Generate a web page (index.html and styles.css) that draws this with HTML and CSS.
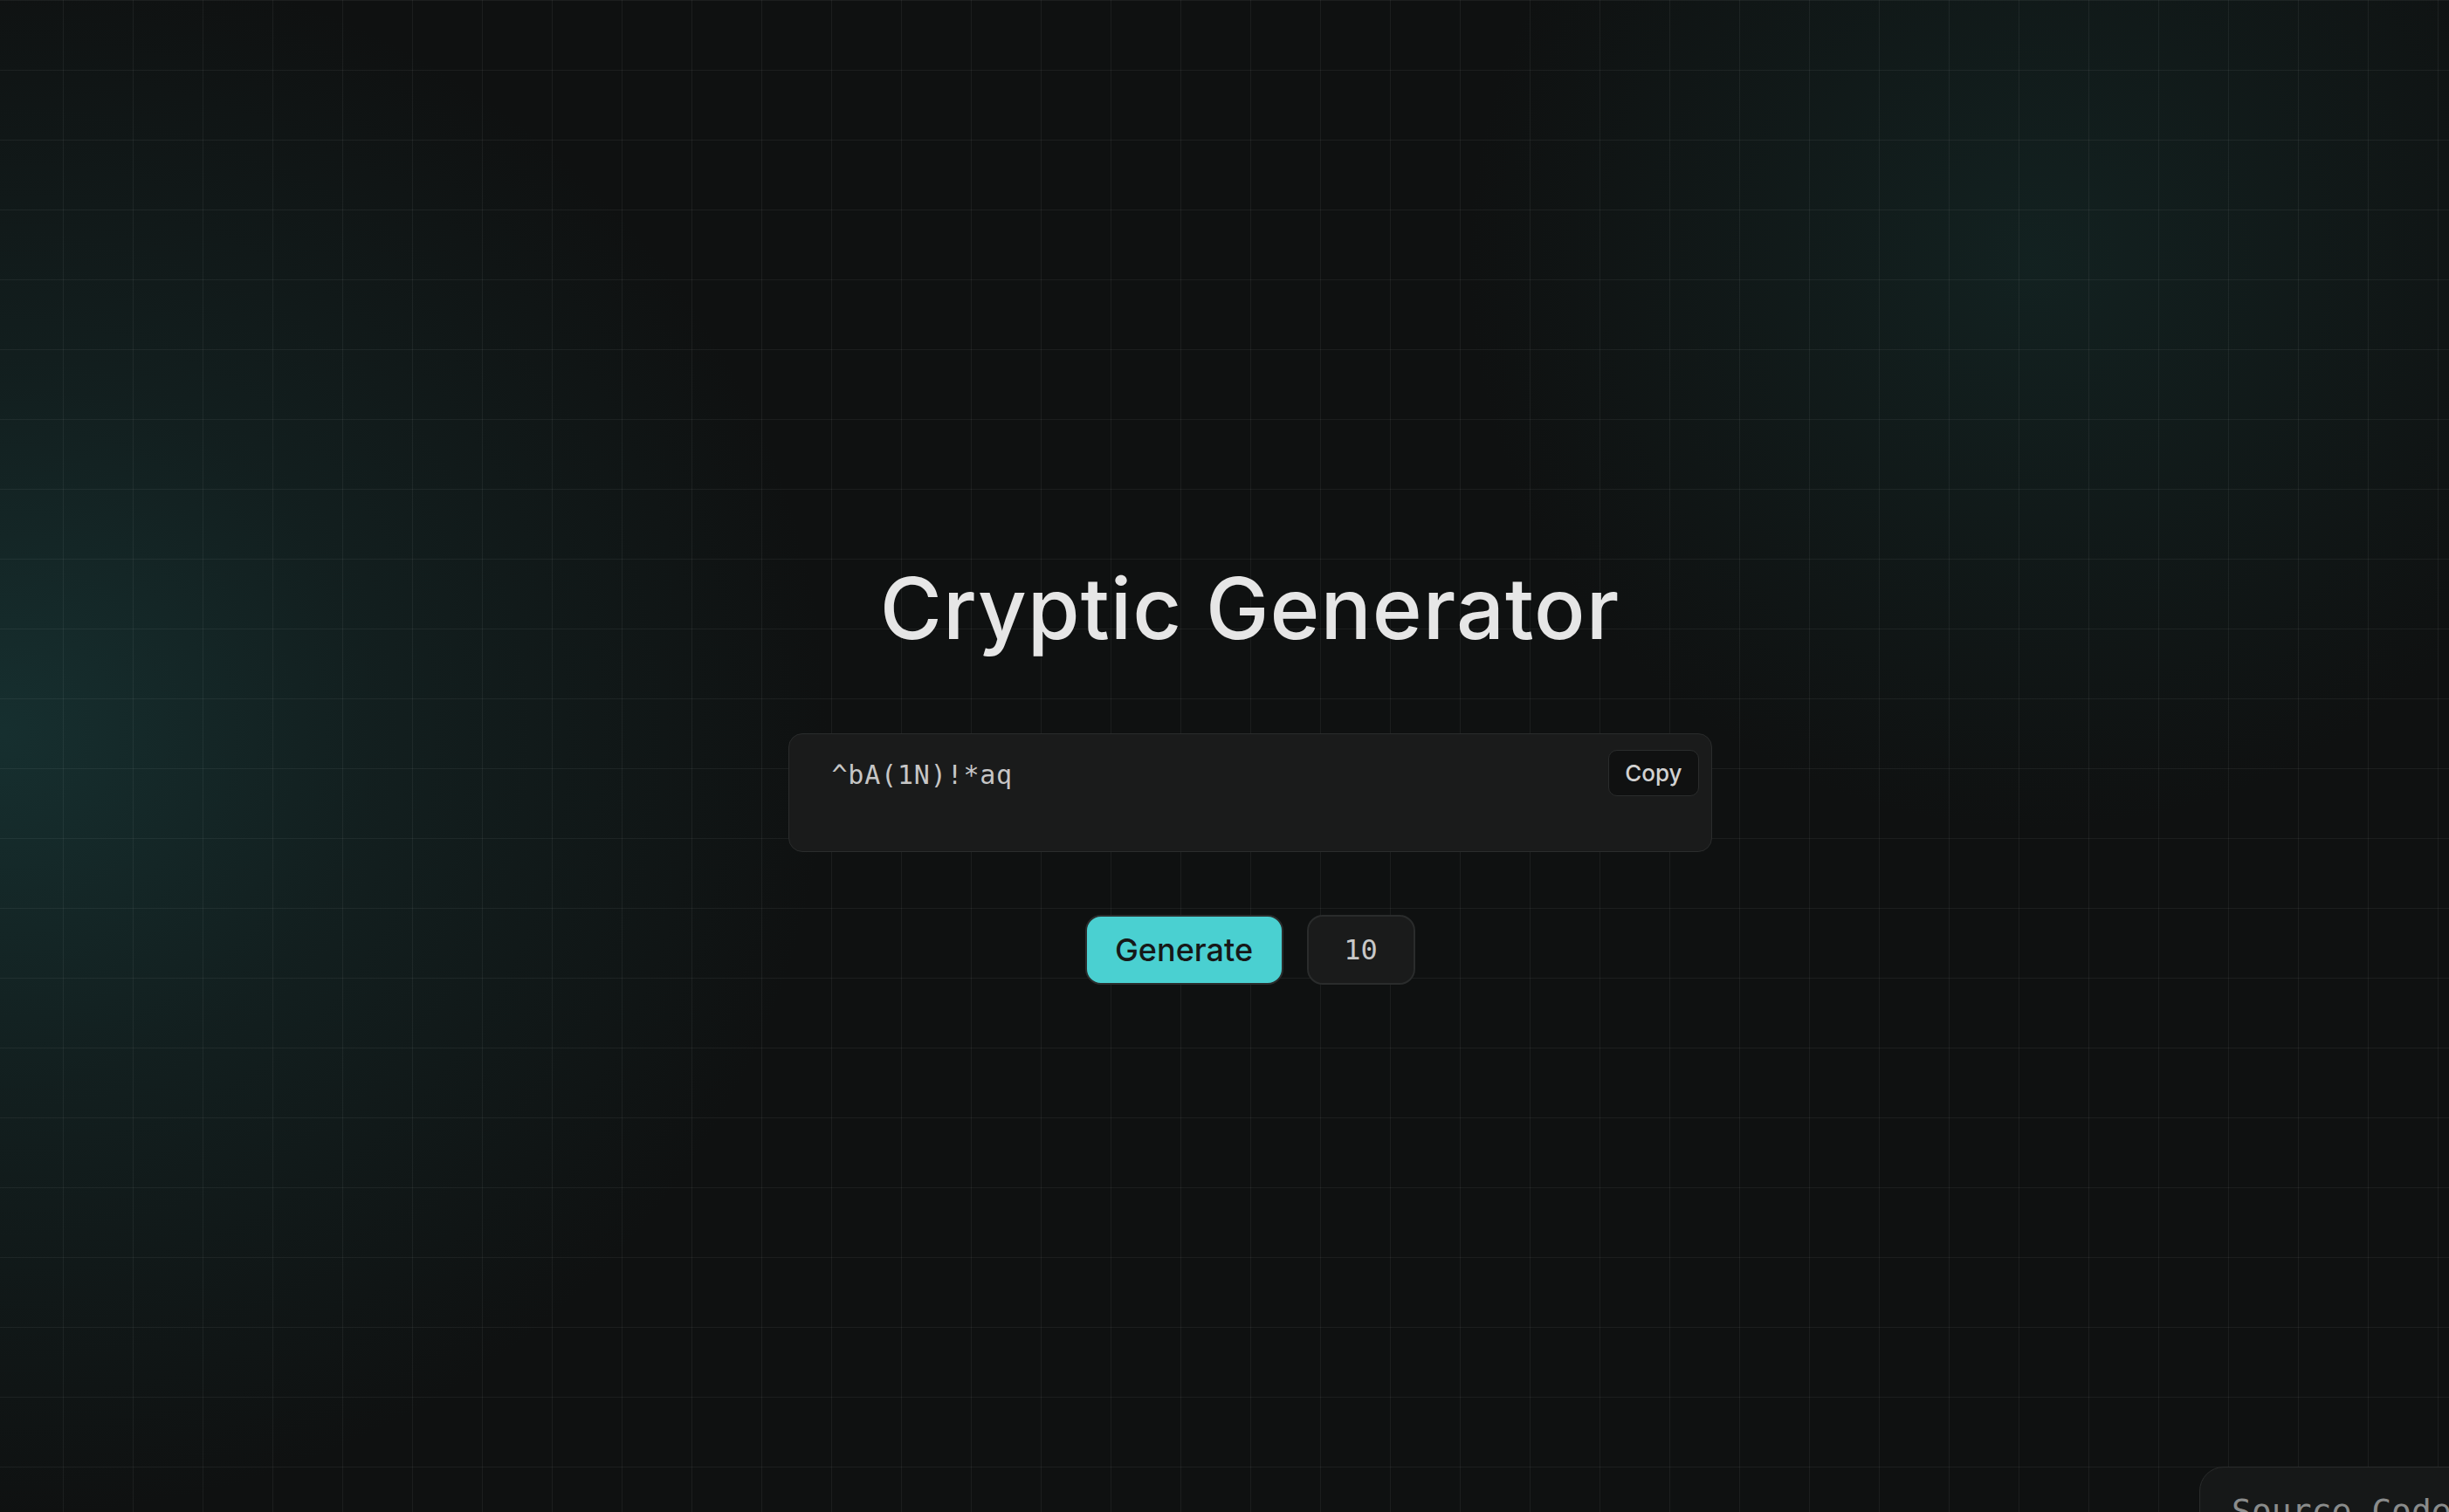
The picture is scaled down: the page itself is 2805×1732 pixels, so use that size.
FILE: index.html
```html
<!DOCTYPE html>
<html lang="en">
<head>
<meta charset="utf-8">
<title>Cryptic Generator</title>
<link rel="stylesheet" href="styles.css">
</head>
<body>
<div class="page">
  <main class="main">
    <h1 class="title">Cryptic Generator</h1>
    <div class="output">
      <div class="output-text">^bA(1N)!*aq</div>
      <button class="copy-btn">Copy</button>
    </div>
    <div class="controls">
      <button class="generate-btn">Generate</button>
      <div class="length-box">10</div>
    </div>
  </main>
  <a class="source-btn">Source Code</a>
</div>
</body>
</html>
```

FILE: styles.css
```css
html, body {
  margin: 0;
  padding: 0;
  height: 100%;
  overflow: hidden;
}

body {
  background-color: #0f1111;
  font-family: Inter, "Noto Sans", sans-serif;
  color: #e6e6e6;
}

.page {
  position: relative;
  width: 100%;
  height: 100%;
  background-image:
    linear-gradient(rgba(255,255,255,0.055) 1px, transparent 1px),
    linear-gradient(90deg, rgba(255,255,255,0.055) 1px, transparent 1px),
    radial-gradient(ellipse 950px 900px at 0px 840px, rgba(28, 72, 72, 0.55), rgba(28,72,72,0.25) 45%, rgba(15,17,17,0) 100%),
    radial-gradient(circle 650px at 2330px 300px, rgba(24, 58, 56, 0.4), rgba(15,17,17,0) 100%);
  background-size: 80px 80px, 80px 80px, 100% 100%, 100% 100%;
  background-position: 0 0, 72px 0, 0 0, 0 0;
}

.main {
  display: flex;
  flex-direction: column;
  align-items: center;
  padding-top: 649px;
  padding-left: 58px;
}

.title {
  margin: 0;
  font-family: Inter, sans-serif;
  font-weight: 500;
  font-size: 97px;
  line-height: 96px;
  letter-spacing: 1px;
  color: #e6e6e6;
}

.output {
  position: relative;
  box-sizing: border-box;
  margin-top: 95px;
  width: 1058px;
  height: 136px;
  background: #1a1b1b;
  border: 1px solid #2a2c2c;
  border-radius: 16px;
  padding: 27px 49px 0;
}

.output-text {
  font-family: "DejaVu Sans Mono", monospace;
  font-size: 30px;
  line-height: 40px;
  letter-spacing: 0.8px;
  color: #c6c6c6;
}

.copy-btn {
  position: absolute;
  top: 18px;
  right: 14px;
  box-sizing: border-box;
  height: 53px;
  padding: 0 18px;
  background: #101111;
  border: 1px solid #2a2c2c;
  border-radius: 10px;
  font-family: Inter, sans-serif;
  font-weight: 500;
  font-size: 26px;
  color: #d2d2d2;
}

.controls {
  display: flex;
  gap: 27px;
  margin-top: 72px;
}

.generate-btn {
  box-sizing: border-box;
  height: 80px;
  width: 227px;
  background: #4ad0d1;
  border: 2px solid #2b2d2d;
  border-radius: 18px;
  font-family: Inter, sans-serif;
  font-weight: 500;
  font-size: 36px;
  color: #161818;
  padding: 0;
}

.length-box {
  box-sizing: border-box;
  height: 80px;
  width: 124px;
  display: flex;
  align-items: center;
  justify-content: center;
  background: #1a1b1b;
  border: 2px solid #2a2c2c;
  border-radius: 18px;
  font-family: "DejaVu Sans Mono", monospace;
  font-size: 32px;
  color: #c8c8c8;
}

.source-btn {
  position: absolute;
  left: 2519px;
  top: 1680px;
  box-sizing: border-box;
  width: 420px;
  height: 120px;
  padding: 30px 0 0 36px;
  background: #161818;
  border: 1px solid #2a2c2c;
  border-radius: 28px;
  font-family: "DejaVu Sans Mono", monospace;
  font-size: 38px;
  line-height: 40px;
  color: #8a8c8c;
  white-space: nowrap;
}
```
